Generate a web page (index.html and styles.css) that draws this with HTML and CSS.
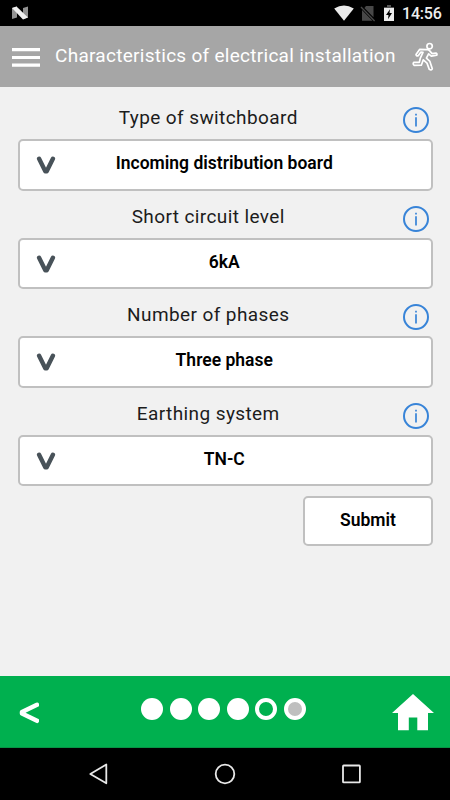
FILE: index.html
```html
<!DOCTYPE html>
<html lang="en">
<head>
<meta charset="utf-8">
<title>Characteristics of electrical installation</title>
<link rel="stylesheet" href="styles.css">
</head>
<body>
<svg class="defs" width="0" height="0" aria-hidden="true">
  <symbol id="chevron" viewBox="0 0 20 19"><path d="M3.1 2.8 9.3 15.2H10.7L16.9 2.8" fill="none" stroke="#485259" stroke-width="4.4" stroke-linecap="round" stroke-linejoin="round"/></symbol>
  <symbol id="info" viewBox="0 0 28 28"><circle cx="14" cy="14" r="12" fill="none" stroke="#3884d8" stroke-width="2"/><path d="M14 11.3V20.5M14 7.7V9.5" fill="none" stroke="#3884d8" stroke-width="1.7"/></symbol>
</svg>
<div class="statusbar">
  <svg class="nougat" width="18" height="14" viewBox="0 0 18 14"><path d="M1 2 6 .5V11.5L1 13ZM12 2 17 .5V11.5L12 13Z" fill="#929292"/><path d="M1 2 5.5.5 17 11.5 12 13.5Z" fill="#efefef"/></svg>
  <svg class="wifi" width="20" height="16" viewBox="0 0 20 16"><path d="M.2 3.5Q10-2.7 19.8 3.5L10 15.8Z" fill="#eaeaea"/></svg>
  <svg class="sim" width="16" height="17" viewBox="0 0 16 17"><path d="M6 1H13.5V12.3L4.4 3ZM2 5 12.5 15.8H2Z" fill="#484848"/><path d="M1 2 14.6 16" stroke="#484848" stroke-width="1.3"/></svg>
  <svg class="battery" width="10" height="16" viewBox="0 0 10 16"><path d="M3 0H7V2H10V5H0V2H3Z" fill="#555"/><path d="M0 3H10V16H0Z" fill="#ededed"/><path d="M6 4.2 2 10H4.5L4 14.2 8 8H5.5Z" fill="#000"/></svg>
  <span class="clock">14:56</span>
</div>
<header class="header">
  <svg class="menu" width="28" height="20" viewBox="0 0 28 20"><path d="M0 1.7H28M0 9.5H28M0 17.2H28" stroke="#fff" stroke-width="3.2"/></svg>
  <h1 class="title">Characteristics of electrical installation</h1>
  <svg class="runner" width="27" height="30" viewBox="0 0 27 30"><g fill="none" stroke="#fff" stroke-width="1.7" stroke-linejoin="round" stroke-linecap="round"><circle cx="17.6" cy="4.2" r="2.7"/><path d="M14.8 7.7 7.6 7.4 4 12.4Q4.2 14.3 6.2 13.7L8.8 10.2 11 10.4 8.3 16.2 7.3 20.4H1.8Q.4 22 2.2 23.4L9.3 23.2 11.3 17.8 15 21.1 17.3 27.4Q19.3 28.7 20.3 26.8L17.9 19.4 14.4 16.2 16.6 11.8 19.3 14.2 24.8 13.1Q25.4 11.4 24 11L20.1 11.6 17.5 8.6Q16.4 7.4 14.8 7.7Z"/></g></svg>
</header>
<main class="form">
  <section class="field">
    <div class="label">Type of switchboard<svg class="info"><use href="#info"/></svg></div>
    <div class="select"><svg class="chevron"><use href="#chevron"/></svg><span>Incoming distribution board</span></div>
  </section>
  <section class="field">
    <div class="label">Short circuit level<svg class="info"><use href="#info"/></svg></div>
    <div class="select"><svg class="chevron"><use href="#chevron"/></svg><span>6kA</span></div>
  </section>
  <section class="field">
    <div class="label">Number of phases<svg class="info"><use href="#info"/></svg></div>
    <div class="select"><svg class="chevron"><use href="#chevron"/></svg><span>Three phase</span></div>
  </section>
  <section class="field">
    <div class="label">Earthing system<svg class="info"><use href="#info"/></svg></div>
    <div class="select"><svg class="chevron"><use href="#chevron"/></svg><span>TN-C</span></div>
  </section>
  <button class="submit">Submit</button>
</main>
<footer class="toolbar">
  <svg class="back" width="20" height="22" viewBox="0 0 20 22"><path d="M18 2.8 3 10V11.5L18 18.8" fill="none" stroke="#fff" stroke-width="4.5" stroke-linecap="round" stroke-linejoin="round"/></svg>
  <div class="steps"><i class="dot"></i><i class="dot"></i><i class="dot"></i><i class="dot"></i><i class="dot current"></i><i class="dot pending"></i></div>
  <svg class="home" width="42" height="37" viewBox="0 0 42 37"><path d="M21 0 42 19H36V36.3H25.3V23.4H16.8V36.3H6V19H0Z" fill="#fff"/></svg>
</footer>
<nav class="navbar">
  <svg width="22" height="22" viewBox="0 0 22 22"><path d="M18.3 1.4V20.3L2.3 11Z" fill="none" stroke="#e8e8e8" stroke-width="1.8" stroke-linejoin="round"/></svg>
  <svg width="22" height="22" viewBox="0 0 22 22"><circle cx="11" cy="11" r="9.3" fill="none" stroke="#e8e8e8" stroke-width="1.8"/></svg>
  <svg width="22" height="22" viewBox="0 0 22 22"><rect x="2" y="2.5" width="16.9" height="16.9" rx=".7" fill="none" stroke="#e8e8e8" stroke-width="1.8"/></svg>
</nav>
</body>
</html>
```
FILE: styles.css
```css
* { box-sizing: border-box; }
body {
  margin: 0;
  width: 450px;
  height: 800px;
  display: flex;
  flex-direction: column;
  overflow: hidden;
  background: #f1f1f1;
  font-family: Roboto, sans-serif;
  color: #000;
}
svg { display: block; flex: none; }
.defs { position: absolute; }

.statusbar {
  flex: none;
  height: 26px;
  display: flex;
  align-items: flex-start;
  background: #000;
  padding: 5px 0 0 11px;
}
.nougat { margin-top: 1px; }
.wifi { margin-left: 305px; }
.sim { margin-left: 6px; }
.battery { margin-left: 8px; }
.clock {
  margin: -1px 0 0 8px;
  font-size: 16px;
  line-height: 20px;
  font-weight: 500;
  letter-spacing: -0.2px;
  color: #eee;
  white-space: nowrap;
}

.header {
  flex: none;
  height: 61px;
  display: flex;
  align-items: center;
  background: #a6a6a6;
  padding-left: 12px;
}
.menu { margin-top: 2px; }
.title {
  margin: 0 0 1px 15px;
  width: 342px;
  font-size: 19px;
  line-height: 24px;
  font-weight: 400;
  letter-spacing: 0.28px;
  color: #fff;
  white-space: nowrap;
}
.runner { margin: 1px 0 0 15px; }

.form {
  flex: 1;
  display: flex;
  flex-direction: column;
  padding: 13px 17px 0 17.5px;
}
.field { height: 98.5px; }
.label {
  position: relative;
  height: 39px;
  padding: 6px 34px 0 0;
  text-align: center;
  font-size: 19px;
  line-height: 24px;
  font-weight: 400;
  letter-spacing: 0.4px;
  color: #1c1c1c;
}
.info {
  position: absolute;
  right: 3.5px;
  top: 6px;
  width: 28px;
  height: 28px;
}
.select {
  display: flex;
  align-items: center;
  height: 51.5px;
  border: 2px solid #c0c0c0;
  border-radius: 5px;
  background: #fff;
  font-size: 17.5px;
  line-height: 20px;
  font-weight: 600;
}
.select span { flex: 1; text-align: center; margin: -3px 39px 0 1px; }
.chevron { width: 20px; height: 19px; margin: 2px 0 0 16px; }
.submit {
  align-self: flex-end;
  width: 130px;
  height: 50px;
  margin-top: 1.5px;
  padding: 0 0 1px;
  border: 2px solid #c0c0c0;
  border-radius: 5px;
  background: #fff;
  color: #000;
  font: 600 17.5px/20px Roboto, sans-serif;
}

.toolbar {
  flex: none;
  height: 72px;
  display: flex;
  align-items: center;
  background: #00b04f;
  border-bottom: 1px solid #079345;
  padding-left: 19px;
}
.back { margin-top: 2px; }
.steps { display: flex; gap: 6.5px; margin: -5px 0 0 102px; }
.dot { width: 22px; height: 22px; border-radius: 50%; background: #fff; }
.current { border: 4px solid #fff; background: #00b04f; }
.pending { border: 4px solid #fff; background: #bfbfbf; }
.home { margin: 2px 0 0 86px; }

.navbar {
  flex: none;
  height: 52px;
  display: flex;
  justify-content: center;
  gap: 104.5px;
  padding-top: 15px;
  background: #000;
}
```
